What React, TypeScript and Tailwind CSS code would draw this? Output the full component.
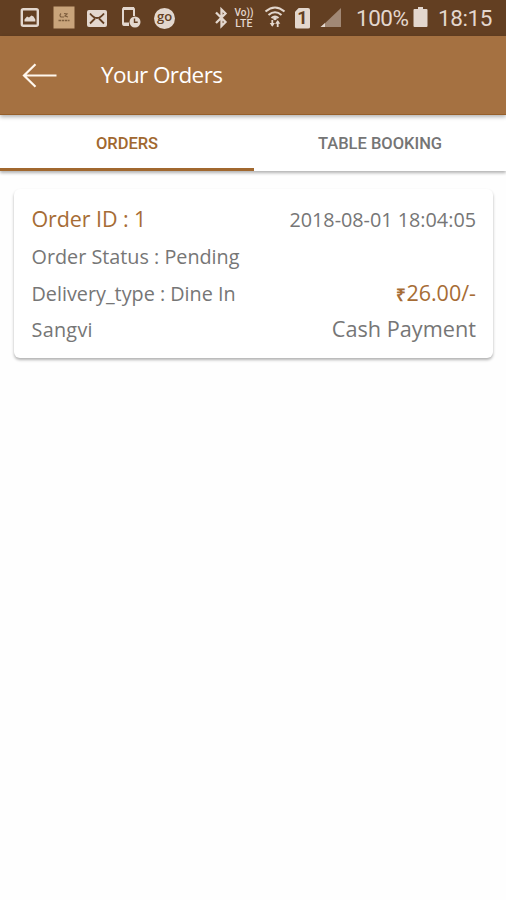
import type { ReactNode } from "react";

function Icon({ w, className, children }: { w: number; className?: string; children: ReactNode }) {
  return (
    <svg width={w} height={36} viewBox={`0 0 ${w} 36`} className={`shrink-0 ${className ?? ""}`} fill="none">
      {children}
    </svg>
  );
}

const LIGHT = "#e3d7ce";
const BAR = "#633f22";

function StatusBar() {
  return (
    <div className="flex h-9 items-center bg-[#633f22] pl-5 font-['Roboto',sans-serif] text-[#e3d7ce]">
      <Icon w={20}>
        <rect x="1.8" y="9.3" width="16" height="16.5" rx="1.5" stroke={LIGHT} strokeWidth="2.4" />
        <path d="M4.500 21.500v-2l2.500-3 2 1 2.500-2 2 1 1.800 3v2z" fill={LIGHT} />
      </Icon>
      <Icon w={22} className="ml-[13px]">
        <rect x="0.5" y="6.5" width="21" height="22" fill="#c9a47b" />
        <path d="M8 13.500q-2 2 0 3.500h3M11 13.500l3 0.500-2 2 3 1" stroke="#7d5d3d" strokeWidth="1.2" />
        <path d="M5.500 20.500h11" stroke="#7d5d3d" strokeWidth="1.6" strokeDasharray="2.5 0.7" />
      </Icon>
      <Icon w={20} className="ml-3">
        <rect x="0" y="10" width="20" height="17" rx="2" fill={LIGHT} />
        <path d="M3 13.500q7 9 14 0M3 23.500l5-5M17 23.500l-5-5" stroke={BAR} strokeWidth="1.8" />
      </Icon>
      <Icon w={20} className="ml-[14px]">
        <path d="M13 16V9.500q0-1.500-1.500-1.500h-8Q2 8 2 9.500v14Q2 25 3.500 25H8" stroke={LIGHT} strokeWidth="2" />
        <path d="M2 8.600h11M2 24h6" stroke={LIGHT} strokeWidth="3" />
        <circle cx="14" cy="22" r="5.500" fill={LIGHT} />
        <path d="M13.500 18.500v3.800h3.200" stroke={BAR} strokeWidth="1.400" />
      </Icon>
      <span className="ml-[13px] flex size-[21px] shrink-0 items-center justify-center rounded-full bg-[#e3d7ce] pb-[4px] font-['Open_Sans',sans-serif] text-[13px] leading-none font-semibold text-[#633f22]">
        go
      </span>
      <Icon w={14} className="ml-[39px]">
        <path d="M2 12.500l9.500 9.500L7.500 26V9.500l4 4L2 23" stroke={LIGHT} strokeWidth="2.3" />
      </Icon>
      <span className="ml-[6px] flex w-[20px] shrink-0 flex-col items-center pt-[1px] font-medium whitespace-nowrap">
        <span className="h-[10px] text-[10px] leading-[10px]">Vo))</span>
        <span className="mt-px h-[10px] text-[10.500px] leading-[10px] tracking-[0.3px]">LTE</span>
      </span>
      <Icon w={22} className="ml-[10px]">
        <path d="M1.500 11.500q9.500-8 19 0M4.500 15q6.500-5.500 13 0M7.500 18q3.500-3 7 0" stroke={LIGHT} strokeWidth="2.100" />
        <circle cx="11" cy="18.500" r="1.800" fill={LIGHT} />
        <path d="M8.300 20v5.500M13.700 27v-5.500" stroke={LIGHT} strokeWidth="1.800" />
        <path d="M5.700 23h5.200l-2.600 3.800zM11.100 23.800h5.200L13.700 20z" fill={LIGHT} />
      </Icon>
      <span className="ml-[9px] flex h-[21px] w-[15px] shrink-0 items-center justify-center rounded-[2px] bg-[#e3d7ce] text-[18px] leading-none font-bold text-[#633f22] [clip-path:polygon(28%_0,100%_0,100%_100%,0_100%,0_20%)]">
        1
      </span>
      <Icon w={22} className="ml-[10px]">
        <path d="M21 8v19H1z" fill="#a18875" />
        <path d="M5 23v4H0.500z" fill={LIGHT} />
      </Icon>
      <span className="ml-[14px] w-[55px] shrink-0 text-[22.500px] leading-9 tracking-[-0.5px] whitespace-nowrap">100%</span>
      <Icon w={15} className="ml-[2px]">
        <path d="M5 7h5v2h3.500q1 0 1 1v16q0 1-1 1h-12q-1 0-1-1V10q0-1 1-1H5z" fill={LIGHT} />
      </Icon>
      <span className="ml-[10px] text-[22.500px] leading-9 tracking-[-0.4px] whitespace-nowrap">18:15</span>
    </div>
  );
}

function Header() {
  return (
    <header className="relative z-10 flex h-[79px] items-center border-b border-[#965f2a] bg-[#a57141] pl-[22px] text-white shadow-[0_2px_4px_rgba(0,0,0,0.3)]">
      <svg width="36" height="26" viewBox="0 0 36 26" fill="none" stroke="#fff7ed" strokeWidth="2.200">
        <path d="M34.500 13.500H2M13.500 2.200L2 13.500l11.500 11.300" />
      </svg>
      <h1 className="ml-[43px] pt-px font-['Open_Sans',sans-serif] text-[22.500px] leading-none font-medium tracking-[-0.600px] whitespace-nowrap">Your Orders</h1>
    </header>
  );
}

function Tabs() {
  return (
    <nav className="flex h-[56px] bg-white font-['Roboto',sans-serif] text-[16.500px] font-medium shadow-[0_2px_3px_rgba(0,0,0,0.3)]">
      <button className="w-[254px] border-b-[3px] border-[#a1682f] pt-[5px] text-[#a1682f]">ORDERS</button>
      <button className="flex-1 pt-[2px] text-[#757575]">TABLE BOOKING</button>
    </nav>
  );
}

function OrderCard() {
  return (
    <section className="mr-[13px] ml-[14px] mt-[18px] flex h-[169px] flex-col rounded-[6px] bg-white pr-[17px] pl-[17.500px] pt-[13px] font-['Open_Sans',sans-serif] text-[19.800px] text-[#767676] shadow-[0_2px_3px_rgba(0,0,0,0.3)]">
      <div className="flex h-[36px] items-center justify-between">
        <span className="pb-[2px] text-[21.500px] tracking-[-0.1px] text-[#a66c35]">Order ID : 1</span>
        <span>2018-08-01 18:04:05</span>
      </div>
      <div className="flex h-[38px] items-center">
        <span>Order Status : Pending</span>
      </div>
      <div className="flex h-[36px] items-center justify-between">
        <span>Delivery_type : Dine In</span>
        <span className="pb-[2px] text-[21.500px] text-[#a66c35]">
          <span className="text-[17px] font-semibold">₹</span>26.00/-
        </span>
      </div>
      <div className="flex h-[35px] items-center justify-between">
        <span className="tracking-[0.3px]">Sangvi</span>
        <span className="text-[21.700px]">Cash Payment</span>
      </div>
    </section>
  );
}

export default function App() {
  return (
    <main className="h-[900px] w-[506px] overflow-hidden bg-[#fefefe]">
      <StatusBar />
      <Header />
      <Tabs />
      <OrderCard />
    </main>
  );
}
